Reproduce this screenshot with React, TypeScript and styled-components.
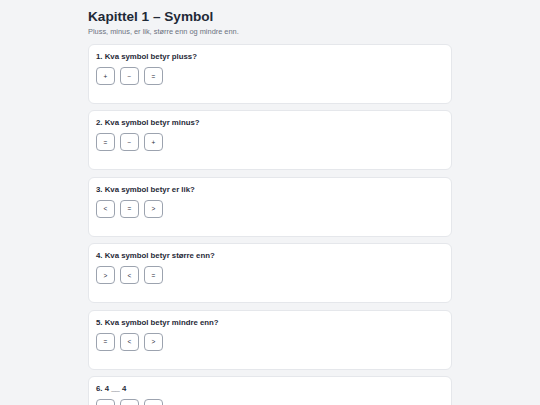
import React from 'react'
import styled, { createGlobalStyle } from 'styled-components'

const GlobalStyle = createGlobalStyle`
  body {
    margin: 0;
    background: #f3f4f6;
    font-family: "Liberation Sans", Arial, sans-serif;
    color: #1f2937;
  }
`

const questions = [
  { q: '1. Kva symbol betyr pluss?', opts: ['+', '−', '='] },
  { q: '2. Kva symbol betyr minus?', opts: ['=', '−', '+'] },
  { q: '3. Kva symbol betyr er lik?', opts: ['<', '=', '>'] },
  { q: '4. Kva symbol betyr større enn?', opts: ['>', '<', '='] },
  { q: '5. Kva symbol betyr mindre enn?', opts: ['=', '<', '>'] },
  { q: '6. 4 __ 4', opts: ['<', '=', '>'] },
]

const App = () => {
  return (
    <Page>
      <GlobalStyle />
      <Title>Kapittel 1 – Symbol</Title>
      <Sub>Pluss, minus, er lik, større enn og mindre enn.</Sub>
      <List>
        {questions.map((item) => (
          <Card key={item.q}>
            <Question>{item.q}</Question>
            <Options>
              {item.opts.map((o, i) => (
                <Choice key={i}>{o}</Choice>
              ))}
            </Options>
          </Card>
        ))}
      </List>
    </Page>
  )
}

export default App

const Page = styled.div`
  max-width: 364px;
  margin: 0 auto;
  padding-top: 8px;
`
const Title = styled.h1`
  font-size: 13.6px;
  font-weight: 700;
  margin: 0;
  line-height: 17px;
  color: #1f2937;
`
const Sub = styled.p`
  font-size: 7.4px;
  margin: 2px 0 0;
  color: #6b7280;
  line-height: 10px;
`
const List = styled.div`
  display: flex;
  flex-direction: column;
  gap: 6.4px;
  margin-top: 7px;
`
const Card = styled.div`
  background: #fff;
  border: 1px solid #e5e7eb;
  border-radius: 6px;
  height: 60px;
  box-sizing: border-box;
  padding: 6px 7px;
`
const Question = styled.div`
  font-size: 7.8px;
  font-weight: 700;
  line-height: 11px;
  color: #1f2937;
`
const Options = styled.div`
  display: flex;
  gap: 5px;
  margin-top: 5px;
`
const Choice = styled.button`
  width: 19px;
  height: 18px;
  padding: 0;
  border: 1px solid #9ca3af;
  border-radius: 4px;
  background: #fff;
  font-family: "Liberation Sans", Arial, sans-serif;
  font-size: 6.5px;
  color: #1f2937;
  display: flex;
  align-items: center;
  justify-content: center;
`
